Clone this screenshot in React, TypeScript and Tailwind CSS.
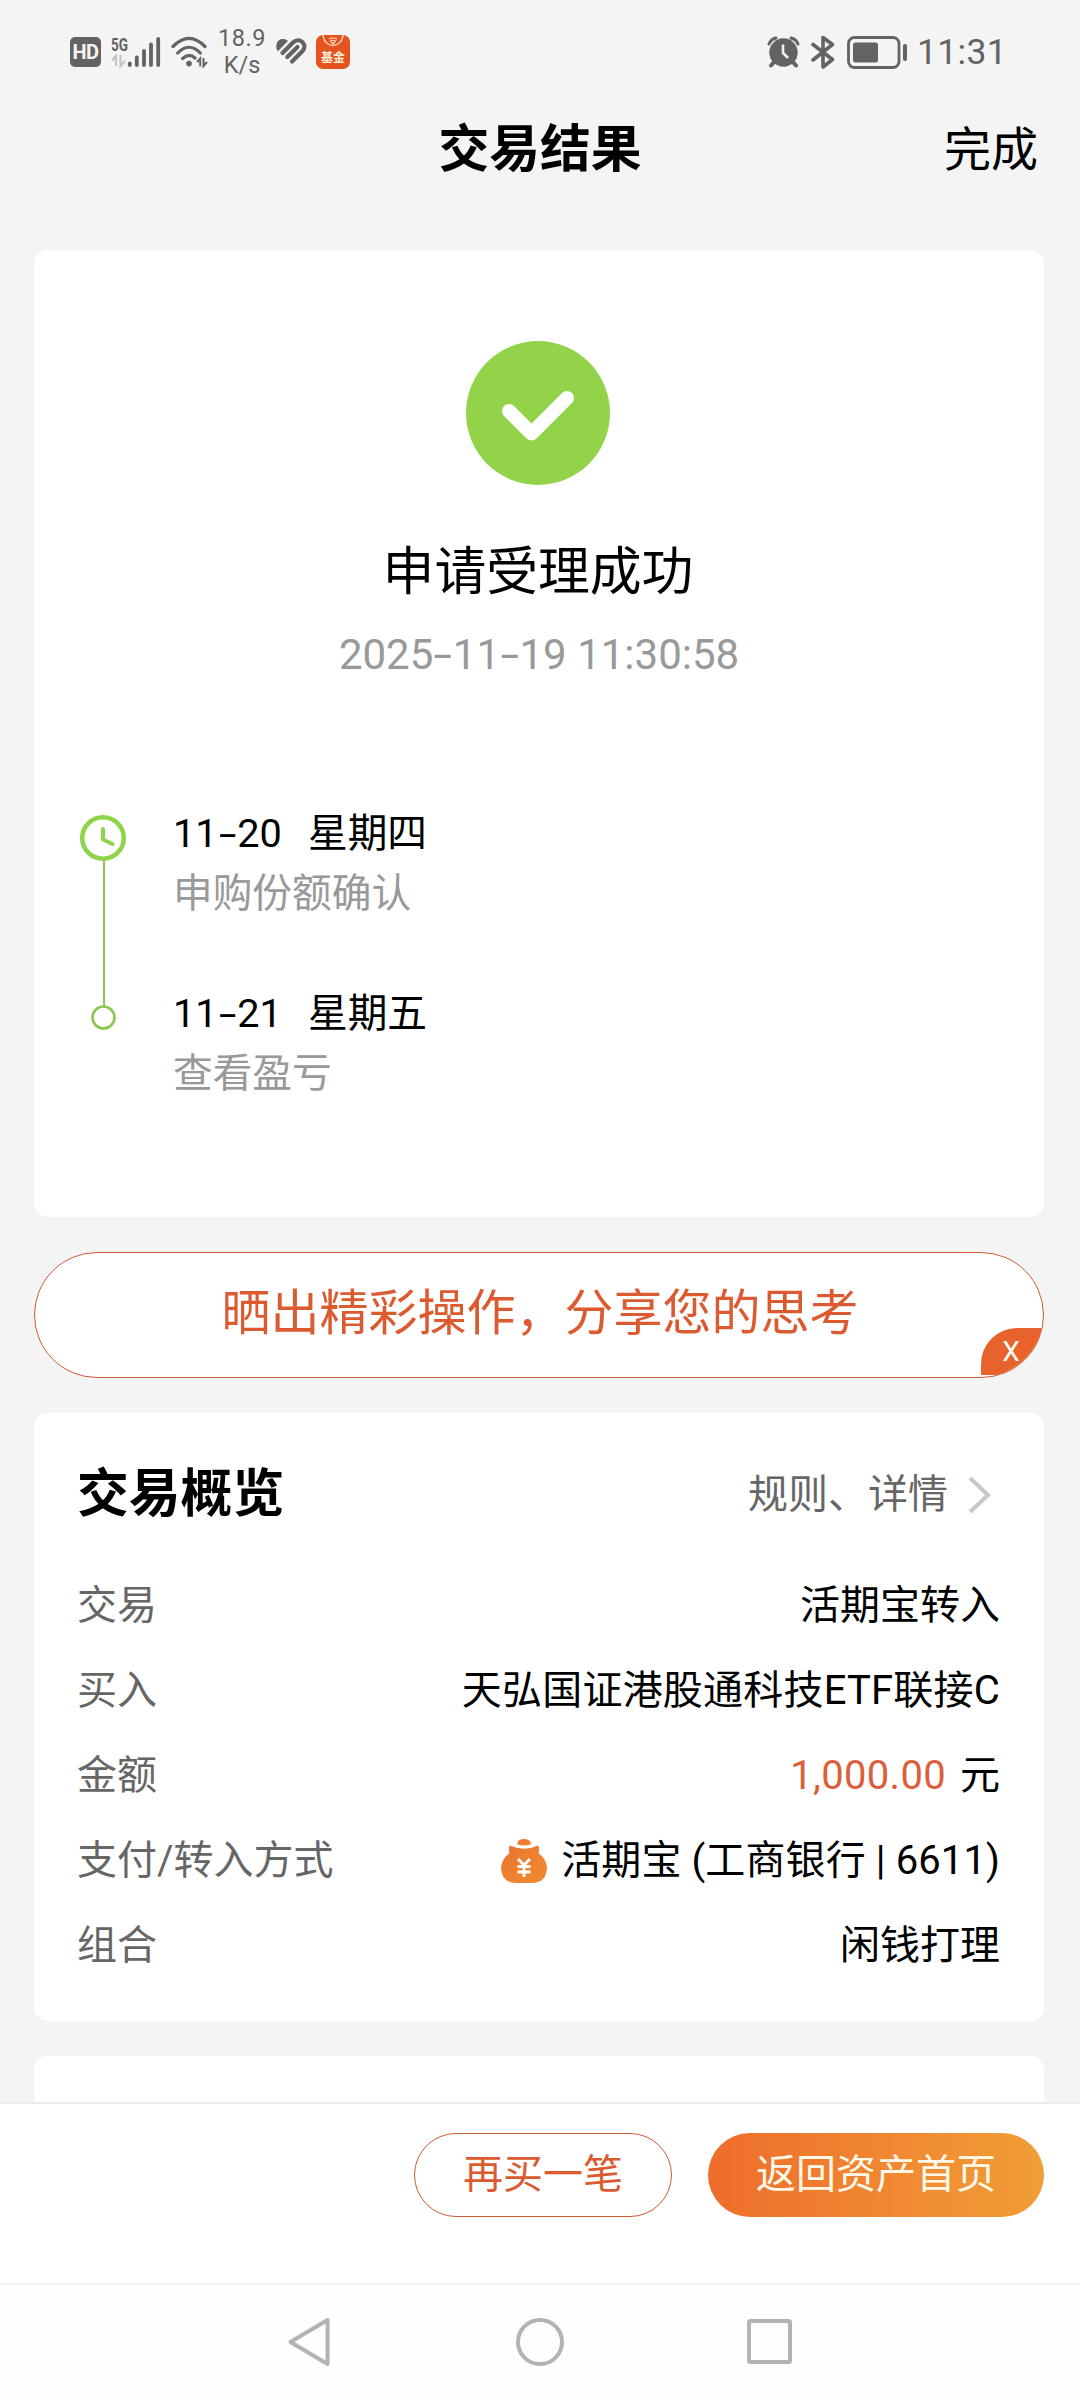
import React from 'react';

const TIMELINE = [
  { date: '11-20', weekday: '星期四', note: '申购份额确认' },
  { date: '11-21', weekday: '星期五', note: '查看盈亏' },
];

// Dates are set with a wider dash than the font's own hyphen
const DateText: React.FC<{ value: string }> = ({ value }) => (
  <>
    {value.split('-').map((part, i) => (
      <React.Fragment key={i}>
        {i > 0 && <span className="inline-block w-[19.5px] text-center scale-x-[1.6]">-</span>}
        {part}
      </React.Fragment>
    ))}
  </>
);

const StatusBar: React.FC = () => (
  <div className="h-[104px] flex items-start justify-between pl-[70px] pr-[73px] pt-[28px] text-[#636363]">
    <div className="flex items-center h-[48px]">
      {/* HD */}
      <div className="w-[31px] h-[30px] rounded-[5px] bg-[#636363] text-[#f4f4f4] text-[20px] leading-[30px] font-bold text-center tracking-[-0.5px]">
        HD
      </div>
      {/* 5G signal */}
      <svg className="ml-[10px]" width="50" height="36" viewBox="0 0 50 36">
        <text x="0" y="17" fontSize="18" fontWeight="700" textLength="17" lengthAdjust="spacingAndGlyphs" fill="#636363">5G</text>
        <g stroke="#c4c4c4" strokeWidth="2.2" fill="none">
          <path d="M5 32V22L1 26.5M9.5 21V32L14 27" />
        </g>
        <g stroke="#636363" strokeWidth="3.8" strokeLinecap="round">
          <path d="M18.8 29.5V31M25.8 23.5V31M33 16.8V31M40 10.5V31M47.2 5V31" />
        </g>
      </svg>
      {/* Wi-Fi */}
      <svg className="ml-[10px]" width="38" height="36" viewBox="0 0 38 36">
        <g stroke="#636363" strokeWidth="3.2" strokeLinecap="round" fill="none">
          <path d="M2 12.5Q18 -3.5 34 12.5M6.7 19Q18 7.5 29.3 19M11.6 24.5Q18 18.5 24 24" />
        </g>
        <circle cx="18" cy="29.6" r="2.8" fill="#636363" />
        <path d="M29.2 32.5V24.5L26 28M32.5 24V32L36 28" stroke="#636363" strokeWidth="2" fill="none" />
      </svg>
      <div className="ml-[9px] w-[48px] text-center text-[23.5px] leading-[27px] -mt-[1px]">
        <div className="tracking-[0.5px]">18.9</div>
        <div>K/s</div>
      </div>
      {/* Health */}
      <svg className="ml-[10px]" width="32" height="28" viewBox="0 0 32 28">
        <path d="M1.800 13.200C-1 9 0 2 6 1Q9.500 .5 12 3Z" fill="#636363" />
        <g stroke="#636363" strokeWidth="4.200" strokeLinecap="round" strokeLinejoin="round" fill="none">
          <path d="M6.500 15L17 4.500C20 1.800 24 1.800 26.500 4.200C29.200 7 28.800 10.500 26.500 13L16 23.500" />
          <path d="M11.300 19L21.500 9" />
        </g>
      </svg>
      {/* Fund app */}
      <svg className="ml-[8px]" width="34" height="34" viewBox="0 0 34 34">
        <rect width="34" height="34" rx="7" fill="#e4541f" />
        <path d="M7 0C8 14 26 14 27 0" stroke="#ffd9c4" strokeWidth="1.300" fill="none" />
        <path d="M13 4Q17 2 21 4M14.500 6Q17 4.500 19.500 6L17 9Z" stroke="#ffd9c4" strokeWidth="1.200" fill="none" />
        <text x="17" y="27" fontSize="12" fontWeight="700" textAnchor="middle" fill="#fff0dc">基金</text>
      </svg>
    </div>

    <div className="flex items-center h-[48px]">
      {/* Alarm */}
      <svg width="33" height="32" viewBox="0 0 33 32">
        <circle cx="16.500" cy="16.500" r="14.200" fill="#636363" />
        <g stroke="#636363" fill="none" strokeLinecap="round">
          <path d="M2 8Q4 3 9 2M31 8Q29 3 24 2" strokeWidth="3" />
          <path d="M7 26L4 29.500M26 26L29 29.500" strokeWidth="4" />
        </g>
        <path d="M16 8.500V17L21 22" stroke="#f4f4f4" strokeWidth="2.600" fill="none" />
      </svg>
      {/* Bluetooth */}
      <svg className="ml-[11px]" width="24" height="35" viewBox="0 0 24 35">
        <path d="M2 9.500L21.500 24.500L12 32V2.500L21.500 9.500L2 25" stroke="#636363" strokeWidth="3.600" strokeLinejoin="round" strokeLinecap="round" fill="none" />
      </svg>
      {/* Battery */}
      <svg className="ml-[12px]" width="61" height="33" viewBox="0 0 61 33">
        <rect x="1.500" y="1.500" width="50.500" height="30" rx="6" stroke="#636363" strokeWidth="2.800" fill="none" />
        <rect x="6" y="6.500" width="25" height="20" rx="2.500" fill="#636363" />
        <rect x="56" y="8" width="4" height="17" rx="2" fill="#636363" />
      </svg>
      <span className="ml-[9px] text-[35.500px] leading-[48px] tracking-[0.300px]">11:31</span>
    </div>
  </div>
);

const ResultCard: React.FC = () => (
  <section className="h-[967px] bg-white rounded-[14px] flex flex-col items-center pt-[91px]">
    <svg className="mr-[2px]" width="144" height="144" viewBox="0 0 144 144">
      <circle cx="72" cy="72" r="72" fill="#92d34a" />
      <path d="M43 70L65.500 92.500L101 57" stroke="#fff" strokeWidth="14" strokeLinecap="round" strokeLinejoin="round" fill="none" />
    </svg>
    <h2 className="mt-[58px] mr-[2px] text-[51.800px] leading-[60px]">申请受理成功</h2>
    <p className="mt-[22px] text-[42px] leading-[60px] text-[#999]">
      <DateText value="2025-11-19 11:30:58" />
    </p>

    <div className="mt-[128px] w-full pl-[45px] flex">
      <svg width="48" height="220" viewBox="0 0 48 220">
        <path d="M25 47V193" stroke="#8cc653" strokeWidth="2" />
        <circle cx="24" cy="25" r="20.800" stroke="#8fd448" strokeWidth="4.500" fill="none" />
        <path d="M24 16V26.500L33.500 31" stroke="#8fd448" strokeWidth="4" strokeLinecap="round" strokeLinejoin="round" fill="none" />
        <circle cx="24.500" cy="204.500" r="11" stroke="#8cc653" strokeWidth="2.600" fill="#fff" />
      </svg>
      <div className="ml-[46px] -mt-[9px]">
        {TIMELINE.map((step) => (
          <div key={step.date} className="h-[180px] text-[39.700px]">
            <div className="flex leading-[60px]">
              <span className="w-[135px]">
                <DateText value={step.date} />
              </span>
              <span>{step.weekday}</span>
            </div>
            <div className="leading-[60px] text-[#999]">{step.note}</div>
          </div>
        ))}
      </div>
    </div>
  </section>
);

const ShareBanner: React.FC = () => (
  <div className="relative h-[126px] mt-[35px] rounded-full border border-[#cf5a33] bg-white overflow-hidden text-center">
    <span className="pl-[2px] text-[49px] leading-[122px] text-[#dc5a30]">晒出精彩操作，分享您的思考</span>
    <div className="absolute right-0 bottom-[2px] w-[62px] h-[47px] rounded-tl-[36px] bg-[#e8632b] text-white text-[28px] leading-[47px] text-center pr-[2px]">
      X
    </div>
  </div>
);

const Row: React.FC<{ label: string; children: React.ReactNode }> = ({ label, children }) => (
  <div className="h-[85px] flex items-center justify-between text-[40px] leading-[60px]">
    <span className="text-[#666]">{label}</span>
    <span className="flex items-center">{children}</span>
  </div>
);

const MoneyBag: React.FC = () => (
  <svg className="mr-[13px]" width="48" height="46" viewBox="0 0 48 46">
    <defs>
      <linearGradient id="bag" x1="0" y1="0" x2="1" y2="1">
        <stop offset="0" stopColor="#ec7330" />
        <stop offset="1" stopColor="#f08c30" />
      </linearGradient>
    </defs>
    <path d="M17 6Q18 1 24 1Q30 1 31.500 6Q24 9 17 6Z" fill="url(#bag)" />
    <path d="M10 7.500Q24 14 38 7.500Q40 9 38.500 15Q47 22 47 30Q46 45 32 45H16Q2 45 1 30Q1 22 9.500 15Q8 9 10 7.500Z" fill="url(#bag)" />
    <path d="M18 21L24 27L30 21M17.500 28.500H30.500M17.500 34H30.500M24 27V39" stroke="#fff" strokeWidth="3" fill="none" />
  </svg>
);

const Overview: React.FC = () => (
  <section className="h-[608px] mt-[35px] bg-white rounded-[14px] pl-[43px] pr-[44px] pt-[52px]">
    <div className="flex items-center justify-between h-[60px]">
      <h2 className="text-[51.800px] leading-[60px] font-bold">交易概览</h2>
      <div className="flex items-center text-[40px] text-[#666] pr-[8px]">
        规则、详情
        <svg className="ml-[20px]" width="24" height="40" viewBox="0 0 24 40">
          <path d="M2 3L20 20L2 37" stroke="#c8c8c8" strokeWidth="4" fill="none" />
        </svg>
      </div>
    </div>
    <div className="mt-[38px]">
      <Row label="交易">活期宝转入</Row>
      <Row label="买入">
        <span className="tracking-[0.200px]">天弘国证港股通科技ETF联接C</span>
      </Row>
      <Row label="金额">
        <span className="text-[#dc5f3a] mr-[14px] tracking-[0.300px]">1,000.00</span>元
      </Row>
      <Row label="支付/转入方式">
        <MoneyBag />
        <span className="tracking-[0.100px]">活期宝 (工商银行 | 6611)</span>
      </Row>
      <Row label="组合">闲钱打理</Row>
    </div>
  </section>
);

const BottomBar: React.FC = () => (
  <div className="h-[181px] bg-white border-t-2 border-[#ececec] flex items-start justify-end gap-[36px] pt-[29px] pr-[36px] text-[40px]">
    <button className="w-[258px] h-[84px] rounded-full border border-[#c95a34] text-[#dc5a30] leading-[78px]">
      再买一笔
    </button>
    <button className="w-[336px] h-[84px] rounded-full bg-linear-to-r from-[#ee6c2b] to-[#f09e37] text-[#fff8e8] leading-[80px]">
      返回资产首页
    </button>
  </div>
);

const NavBar: React.FC = () => (
  <div className="flex-1 bg-[#fefefe] border-t-2 border-[#f5f5f5] flex justify-center pt-[31px]">
    <svg className="mr-[1px]" width="506" height="52" viewBox="0 0 506 52" stroke="#b3b3b3" strokeWidth="4" fill="none" strokeLinejoin="round">
      <path d="M40.500 4V48L3.500 26Z" />
      <circle cx="253" cy="26" r="22" />
      <rect x="462" y="5" width="41" height="41" rx="1.500" />
    </svg>
  </div>
);

const App: React.FC = () => {
  return (
    <div className="w-[1080px] h-[2400px] flex flex-col overflow-hidden bg-[#f4f4f4] text-black font-[Roboto,'Noto_Sans_CJK_SC',sans-serif]">
      <StatusBar />
      <header className="h-[88px] grid grid-cols-3 items-center px-[42px]">
        <span />
        <h1 className="text-center text-[50.800px] leading-[92px] font-bold">交易结果</h1>
        <span className="text-right text-[47px] leading-[92px]">完成</span>
      </header>
      <main className="h-[1910px] overflow-hidden pt-[58px] pl-[34px] pr-[36px]">
        <ResultCard />
        <ShareBanner />
        <Overview />
        <section className="h-[120px] mt-[35px] bg-white rounded-[14px]" />
      </main>
      <BottomBar />
      <NavBar />
    </div>
  );
};

export default App;
